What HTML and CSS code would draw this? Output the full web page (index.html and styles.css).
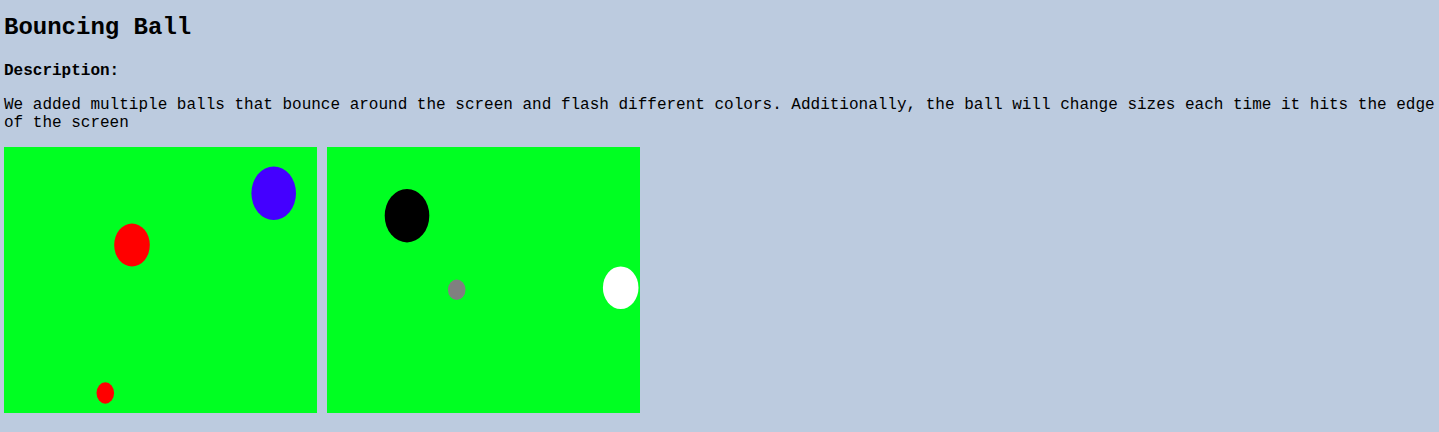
FILE: index.html
```html
<!DOCTYPE html>
<html>
<head>
<meta charset="utf-8">
<title>Bouncing Ball</title>
<link rel="stylesheet" href="styles.css">
</head>
<body>
<h2 class="title">Bouncing Ball</h2>
<h4 class="label">Description:</h4>
<p class="desc">We added multiple balls that bounce around the screen and flash different colors. Additionally, the ball will change sizes each time it hits the edge of the screen</p>
<div class="canvases">
  <svg class="canvas" width="313" height="266" viewBox="0 0 313 266">
    <rect width="313" height="266" fill="#00ff22"/>
    <ellipse cx="269.7" cy="46.3" rx="22.3" ry="26.8" fill="#4400ff"/>
    <ellipse cx="128" cy="98" rx="17.8" ry="21.5" fill="#ff0000"/>
    <ellipse cx="101.3" cy="246" rx="8.8" ry="10.7" fill="#ff0000"/>
  </svg>
  <svg class="canvas" width="313" height="266" viewBox="0 0 313 266">
    <rect width="313" height="266" fill="#00ff22"/>
    <ellipse cx="80" cy="68.7" rx="22.3" ry="26.7" fill="#000000"/>
    <ellipse cx="129.7" cy="142.7" rx="8.8" ry="10.3" fill="#808080"/>
    <ellipse cx="293.7" cy="140.7" rx="17.8" ry="21.3" fill="#ffffff"/>
  </svg>
</div>
</body>
</html>
```
FILE: styles.css
```css
html, body {
  background: #bccbdf;
}
body {
  margin: 0;
  padding: 0 4px;
  font-family: "Liberation Mono", "Courier New", monospace;
  color: #000;
}
.title {
  font-size: 24px;
  font-weight: bold;
  margin: 14px 0 0;
}
.label {
  font-size: 16px;
  font-weight: bold;
  margin: 21px 0 0;
}
.desc {
  font-size: 16px;
  margin: 16px 0 0;
  line-height: 18px;
}
.canvases {
  display: flex;
  gap: 10px;
  margin-top: 15px;
}
.canvas {
  display: block;
}
```
